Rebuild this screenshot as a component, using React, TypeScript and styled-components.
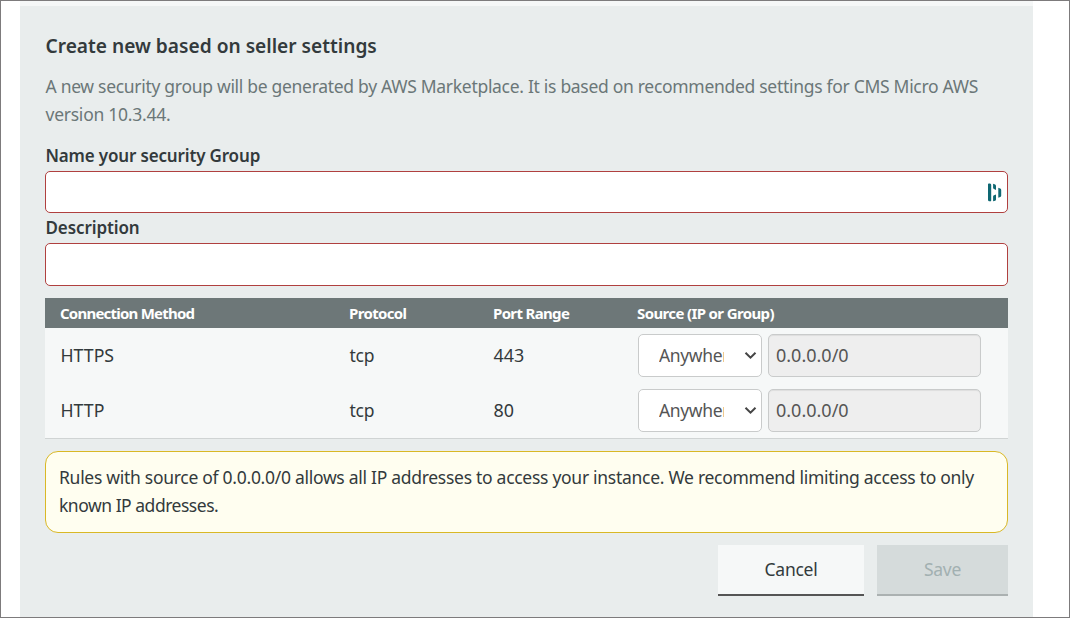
import React from "react";
import styled, { createGlobalStyle } from "styled-components";

const GlobalStyle = createGlobalStyle`
  *, *::before, *::after { box-sizing: border-box; }
  body { margin: 0; background: #fff; }
`;

const Page = styled.div`
  height: 618px;
  border: 1px solid #7d7b7c;
  padding: 0 36px 0 19px;
  overflow: hidden;
  background: #fff;
  color: #333a3c;
  font: 400 17.5px/28px "Noto Sans", "Open Sans", sans-serif;
`;

const Panel = styled.main`
  height: 616px;
  border-top: 5px solid #f5f7f7;
  padding: 26px 25px 0;
  background: #e9eded;
`;

const Title = styled.h1`
  margin: 0;
  padding-left: 0.5px;
  font-size: 19.15px;
  font-weight: 600;
  line-height: 28px;
  white-space: nowrap;
`;

const Intro = styled.p`
  margin: 12px 0 14px;
  padding-left: 0.5px;
  color: #6b7778;
`;

const Line = styled.span<{ $spacing?: number; $size?: number }>`
  display: block;
  white-space: nowrap;
  font-size: ${(p) => (p.$size ? `${p.$size}px` : "inherit")};
  letter-spacing: ${(p) => p.$spacing ?? 0}px;
`;

const Cell = styled(Line)`
  padding: 0 0 2px 0.5px;
`;

const Label = styled.label<{ $height: number; $spacing?: number }>`
  display: block;
  height: ${(p) => p.$height}px;
  padding-left: 0.5px;
  font-size: 17px;
  font-weight: 600;
  line-height: ${(p) => p.$height}px;
  letter-spacing: ${(p) => p.$spacing ?? 0}px;
`;

const NameLabel = styled(Label)`
  line-height: 28px;
`;

const Field = styled.div<{ $height: number }>`
  display: flex;
  align-items: center;
  height: ${(p) => p.$height}px;
  padding-right: 5px;
  border: 1px solid #b0403f;
  border-radius: 5px;
  background: #fff;
`;

const TextInput = styled.input`
  flex: 1;
  height: 100%;
  border: 0;
  outline: 0;
  background: transparent;
`;

const Table = styled.section`
  margin-top: 12px;
  background: #f6f8f8;
  border-bottom: 1px solid #d0d4d4;
`;

const Row = styled.div`
  display: grid;
  grid-template-columns: 289px 144px 144px 1fr;
  align-items: center;
  height: 55px;
  padding-left: 15px;
`;

const HeaderRow = styled(Row)`
  height: 30px;
  background: #6d7778;
  color: #fff;
  font-size: 15px;
  font-weight: 700;
`;

const Source = styled.div`
  display: flex;
  gap: 6px;
  padding-left: 1px;
`;

const Select = styled.button`
  display: flex;
  align-items: center;
  justify-content: space-between;
  width: 124px;
  height: 43px;
  padding: 0 4px 0 20px;
  border: 1px solid #c9cbcb;
  border-radius: 5px;
  background: #fff;
  color: #555;
  font: inherit;
`;

const Clip = styled.span`
  width: 65px;
  padding-bottom: 2px;
  overflow: hidden;
  text-align: left;
  white-space: nowrap;
  letter-spacing: -0.35px;
`;

const Address = styled.div`
  width: 213px;
  height: 43px;
  padding: 0 7px;
  border: 1px solid #c9cbcb;
  border-radius: 5px;
  background: #eee;
  box-shadow: inset 0 1px 1px rgba(0, 0, 0, 0.07);
  color: #555;
  font-size: 18px;
  line-height: 41px;
`;

const Notice = styled.p`
  height: 82px;
  margin: 12px 0;
  padding: 11px 13px;
  border: 1px solid #d9b826;
  border-radius: 13px;
  background: #fffef0;
`;

const Actions = styled.div`
  display: flex;
  justify-content: flex-end;
  gap: 13px;
`;

const Button = styled.button<{ $width: number }>`
  width: ${(p) => p.$width}px;
  height: 51px;
  padding: 0 0 1px;
  border: 0;
  border-bottom: 2px solid #555555;
  background: #f6f8f8;
  color: #333a3c;
  font: inherit;
  letter-spacing: -0.25px;
  &:disabled {
    border-bottom-color: #abb1b1;
    background: #d5dbdb;
    color: #a2b0b1;
  }
`;

const rules = [
  { method: "HTTPS", protocol: "tcp", port: "443" },
  { method: "HTTP", protocol: "tcp", port: "80" },
];

const Mark = () => (
  <svg width="14" height="19" viewBox="0 0 14 19" fill="#0e6772">
    <path d="M0 1.2Q0 .3 1 .4L2 .6Q3.200.9 3.200 2V17.400Q3.200 18.400 2.200 18.300L1 18.300Q0 18.100 0 17Z" />
    <path d="M5.100 .7L7.200 1.500Q8 2 8 3V7L6 6Q5.100 5.700 5.100 5ZM5.100 13.400Q5.100 12.600 6 12.300L8 11.500V16.600Q8 17.500 7.200 17.800L5.100 18.300Z" />
    <path d="M10.300 4.800L12.200 5.600Q13.200 6 13.200 7V12.700Q13.200 13.700 12.200 14L10.300 14.800Z" />
  </svg>
);

const Chevron = () => (
  <svg width="13" height="9" viewBox="0 0 13 9" fill="none" stroke="#454545" strokeWidth="2">
    <path d="M1.500 1.700L6.500 6.700L11.500 1.700" />
  </svg>
);

export default function App() {
  return (
    <Page>
      <GlobalStyle />
      <Panel>
        <Title>Create new based on seller settings</Title>
        <Intro>
          <Line $spacing={-0.3}>
            A new security group will be generated by AWS Marketplace. It is based on recommended settings for CMS Micro AWS
          </Line>
          <Line $spacing={-0.25}>version 10.3.44.</Line>
        </Intro>
        <NameLabel $height={29} $spacing={-0.16} htmlFor="group-name">Name your security Group</NameLabel>
        <Field $height={42}>
          <TextInput id="group-name" />
          <Mark />
        </Field>
        <Label $height={30} $spacing={-0.1} htmlFor="group-description">Description</Label>
        <Field $height={43}>
          <TextInput id="group-description" />
        </Field>
        <Table>
          <HeaderRow>
            <Line $spacing={-0.78}>Connection Method</Line>
            <Line $spacing={-0.65}>Protocol</Line>
            <Line $spacing={-0.66}>Port Range</Line>
            <Line $spacing={-0.63}>Source (IP or Group)</Line>
          </HeaderRow>
          {rules.map((rule) => (
            <Row key={rule.method}>
              <Cell $size={17.7}>{rule.method}</Cell>
              <Cell $spacing={-0.2}>{rule.protocol}</Cell>
              <Cell $size={17.9}>{rule.port}</Cell>
              <Source>
                <Select>
                  <Clip>Anywhere</Clip>
                  <Chevron />
                </Select>
                <Address>0.0.0.0/0</Address>
              </Source>
            </Row>
          ))}
        </Table>
        <Notice>
          <Line $spacing={-0.285}>
            Rules with source of 0.0.0.0/0 allows all IP addresses to access your instance. We recommend limiting access to only
          </Line>
          <Line $spacing={-0.48}>known IP addresses.</Line>
        </Notice>
        <Actions>
          <Button $width={146}>Cancel</Button>
          <Button $width={131} disabled>Save</Button>
        </Actions>
      </Panel>
    </Page>
  );
}
